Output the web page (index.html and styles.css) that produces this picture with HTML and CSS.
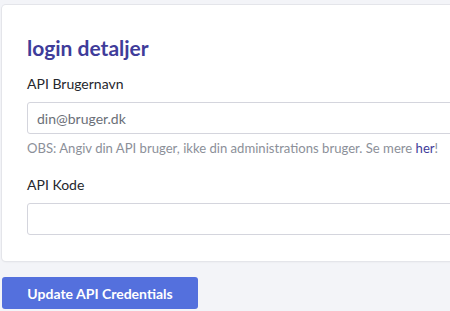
FILE: index.html
```html
<!DOCTYPE html>
<html lang="da">
<head>
<meta charset="utf-8">
<link rel="stylesheet" href="styles.css">
</head>
<body>
<div class="page">
  <div class="card">
    <h2 class="title">login detaljer</h2>
    <div class="field">
      <label class="label">API Brugernavn</label>
      <input class="input" type="text" placeholder="din@bruger.dk">
      <p class="help">OBS: Angiv din API bruger, ikke din administrations bruger. Se mere <a class="link" href="#">her</a>!</p>
    </div>
    <div class="field">
      <label class="label">API Kode</label>
      <input class="input" type="password">
    </div>
  </div>
  <button class="btn">Update API Credentials</button>
</div>
</body>
</html>
```
FILE: styles.css
```css
html, body {
  margin: 0;
  padding: 0;
  background: #f3f4f8;
  font-family: Lato, "Open Sans", sans-serif;
}
.page {
  padding: 5px 0 0 2px;
  width: 470px;
}
.card {
  background: #fff;
  border-radius: 4px;
  box-shadow: 0 0 0 1px #e4e5ea, 0 1px 2px rgba(0,0,0,0.08);
  padding: 31px 0 26px 25px;
  display: flex;
  flex-direction: column;
}
.title {
  margin: 0 0 14px;
  font-size: 21px;
  font-weight: 700;
  color: #3f3c9a;
  line-height: 24px;
}
.field {
  display: flex;
  flex-direction: column;
}
.field + .field { margin-top: 18px; }
.label {
  font-size: 14px;
  color: #25272d;
  line-height: 20px;
  margin-bottom: 8px;
}
.input {
  height: 32px;
  box-sizing: border-box;
  border: 1px solid #d4d5dd;
  border-radius: 3px;
  padding: 0 9px;
  font: inherit;
  font-size: 14px;
  color: #333;
  background: #fff;
  outline: none;
}
.input::placeholder { color: #6b6f78; }
.help {
  margin: 5px 0 0;
  font-size: 13.1px;
  color: #8c9099;
  line-height: 18px;
}
.link { color: #3f3c9a; text-decoration: none; }
.btn {
  margin-top: 16px;
  width: 196px;
  height: 32px;
  background: #5470dd;
  border: none;
  border-radius: 3px;
  color: #fff;
  font: inherit;
  font-size: 14px;
  font-weight: 700;
  cursor: pointer;
}
```
